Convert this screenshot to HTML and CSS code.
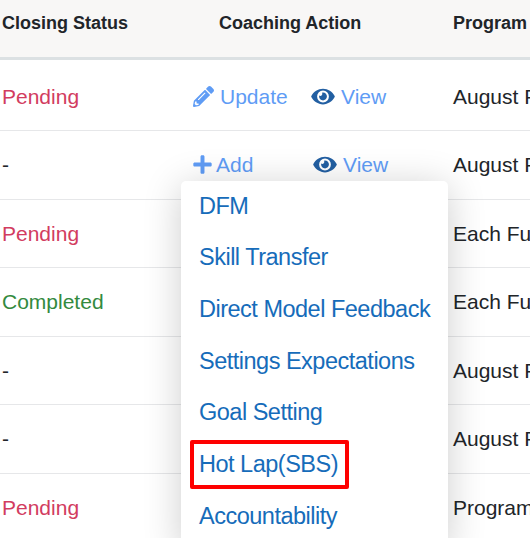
FILE: index.html
```
<!DOCTYPE html>
<html lang="en">
<head>
<meta charset="utf-8">
<title>Coaching</title>
<link rel="stylesheet" href="styles.css">
</head>
<body>
<svg class="sprite" aria-hidden="true">
  <symbol id="pencil" viewBox="0 0 512 512"><path d="M497.9 142.1l-46.1 46.1c-4.7 4.7-12.3 4.7-17 0l-111-111c-4.7-4.7-4.7-12.3 0-17l46.1-46.1c18.7-18.7 49.1-18.7 67.9 0l60.1 60.1c18.8 18.7 18.8 49.1 0 67.9zM284.2 99.8L21.6 362.4.4 483.9c-2.9 16.4 11.4 30.6 27.8 27.8l121.5-21.3 262.6-262.6c4.7-4.7 4.7-12.3 0-17l-111-111c-4.8-4.7-12.4-4.7-17.1 0zM124.1 339.9c-5.5-5.5-5.5-14.3 0-19.8l154-154c5.5-5.5 14.3-5.5 19.8 0s5.5 14.3 0 19.8l-154 154c-5.5 5.5-14.3 5.5-19.8 0zM88 424h48v36.3l-64.5 11.3-31.1-31.1L51.7 376H88v48z"/></symbol>
  <symbol id="eye" viewBox="0 0 576 512"><path d="M572.52 241.4C518.29 135.59 410.93 64 288 64S57.68 135.64 3.48 241.41a32.35 32.35 0 0 0 0 29.19C57.71 376.41 165.07 448 288 448s230.32-71.64 284.52-177.41a32.35 32.35 0 0 0 0-29.19zM288 400a144 144 0 1 1 144-144 143.93 143.93 0 0 1-144 144zm0-240a95.31 95.31 0 0 0-25.31 3.79 47.85 47.85 0 0 1-66.9 66.9A95.78 95.78 0 1 0 288 160z"/></symbol>
  <symbol id="plus" viewBox="0 0 448 512"><path d="M416 208H272V64c0-17.67-14.33-32-32-32h-32c-17.67 0-32 14.33-32 32v144H32c-17.67 0-32 14.33-32 32v32c0 17.67 14.33 32 32 32h144v144c0 17.67 14.33 32 32 32h32c17.67 0 32-14.33 32-32V304h144c17.67 0 32-14.33 32-32v-32c0-17.67-14.33-32-32-32z"/></symbol>
</svg>
<div class="table">
  <div class="row head"><div class="status">Closing Status</div><div class="heading">Coaching Action</div><div class="program">Program</div></div>
  <div class="row first">
    <div class="status pending">Pending</div>
    <div class="actions"><a class="action update"><svg class="icon pencil"><use href="#pencil"/></svg>Update</a><a class="action view"><svg class="icon eye"><use href="#eye"/></svg>View</a></div>
    <div class="program">August P</div>
  </div>
  <div class="row tall">
    <div class="status">-</div>
    <div class="actions"><a class="action add"><svg class="icon plus"><use href="#plus"/></svg>Add</a><a class="action view"><svg class="icon eye"><use href="#eye"/></svg>View</a>
      <div class="menu">
        <a class="item">DFM</a>
        <a class="item">Skill Transfer</a>
        <a class="item">Direct Model Feedback</a>
        <a class="item">Settings Expectations</a>
        <a class="item">Goal Setting</a>
        <a class="item marked">Hot Lap(SBS)</a>
        <a class="item">Accountability</a>
      </div>
    </div>
    <div class="program">August P</div>
  </div>
  <div class="row"><div class="status pending">Pending</div><div></div><div class="program">Each Fu</div></div>
  <div class="row tall"><div class="status completed">Completed</div><div></div><div class="program">Each Fu</div></div>
  <div class="row"><div class="status">-</div><div></div><div class="program">August P</div></div>
  <div class="row tall"><div class="status">-</div><div></div><div class="program">August P</div></div>
  <div class="row"><div class="status pending">Pending</div><div></div><div class="program">Program</div></div>
</div>
</body>
</html>
```
FILE: styles.css
```
html, body {
  margin: 0;
  width: 530px;
  height: 538px;
  overflow: hidden;
  background: #fff;
}
body {
  font: 21px/24px "Liberation Sans", Arial, sans-serif;
  color: #212529;
}
.sprite {
  display: none;
}
.row {
  display: grid;
  grid-template-columns: 181px 272px 1fr;
  box-sizing: border-box;
  height: 68px;
  padding-top: 22px;
  border-bottom: 1px solid #e6e7e9;
}
.row.tall {
  height: 69px;
}
.row.first {
  height: 71px;
  padding-top: 25px;
}
.row.head {
  height: 60px;
  padding-top: 11px;
  border-bottom: 3px solid #dce1e3;
  background: #f8f7f6;
  font-size: 18px;
  font-weight: bold;
}
.status {
  padding-left: 2px;
}
.heading {
  padding-left: 38px;
}
.program {
  white-space: nowrap;
}
.pending {
  color: #d23c5f;
}
.completed {
  color: #338a3e;
}
.actions {
  position: relative;
  display: flex;
  align-items: flex-start;
  padding-left: 12px;
}
.action {
  display: flex;
  align-items: center;
  height: 24px;
  color: #5f9cf5;
}
.icon {
  height: 21px;
  margin-bottom: 1px;
  fill: currentColor;
}
.pencil {
  width: 21px;
  margin-right: 6px;
}
.plus {
  width: 19px;
  margin-right: 4px;
}
.eye {
  width: 24px;
  margin-right: 6px;
  fill: #225fa2;
}
.update {
  width: 118px;
}
.add {
  width: 120px;
}
.menu {
  position: absolute;
  top: 28px;
  left: 0;
  z-index: 1;
  box-sizing: border-box;
  width: 267px;
  height: 368px;
  border-radius: 5px;
  background: #fff;
  box-shadow: 0 5px 38px rgba(0, 0, 0, .2);
  color: #166cba;
  font-size: 23.5px;
  letter-spacing: -.5px;
}
.item {
  position: relative;
  display: flex;
  align-items: center;
  box-sizing: border-box;
  height: 51.7px;
  padding: 0 0 2.25px 18px;
}
.item.marked::after {
  content: "";
  position: absolute;
  top: 1px;
  left: 9px;
  box-sizing: border-box;
  width: 159px;
  height: 49px;
  border: 4px solid #fe0000;
  border-radius: 2px;
}
```
